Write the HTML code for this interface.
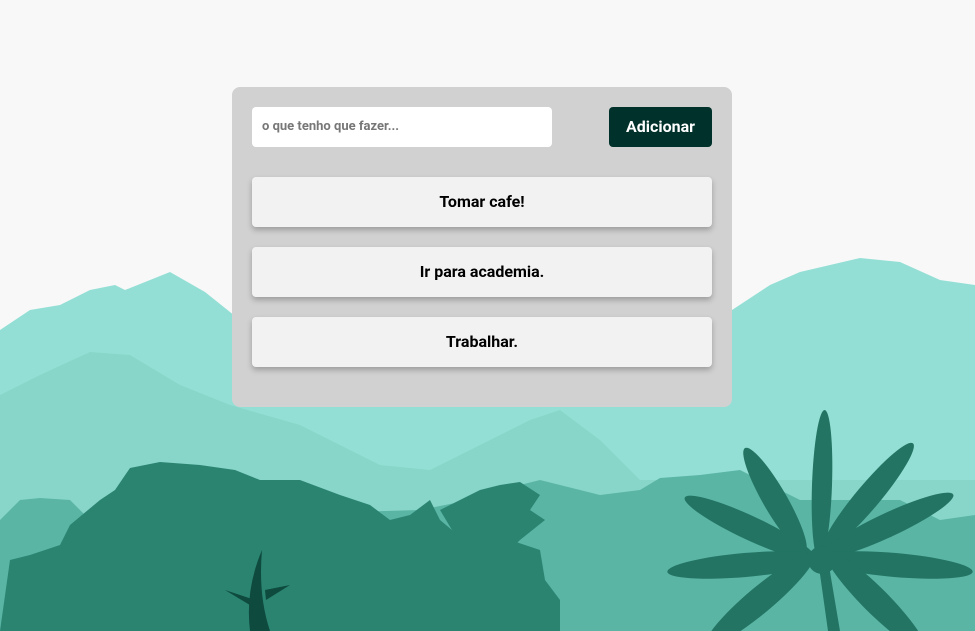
<!DOCTYPE html>
<html><head><meta charset="utf-8"><style>
html,body{margin:0;padding:0;width:975px;height:631px;overflow:hidden;background:#f8f8f8;font-family:"Roboto","Liberation Sans",sans-serif}
svg.bg{position:absolute;left:0;top:0}
.card{position:absolute;left:232px;top:87px;width:500px;height:320px;background:#d1d1d1;border-radius:8px}
.inp{position:absolute;left:20px;top:20px;width:300px;height:40px;background:#fff;border-radius:4px;font-size:13px;font-weight:bold;color:#777;line-height:40px;padding-left:10px;box-sizing:border-box}
.btn{position:absolute;left:377px;top:20px;width:103px;height:40px;background:#00312a;border-radius:4px;color:#fff;font-weight:bold;font-size:16px;line-height:40px;text-align:center}
.item{position:absolute;left:20px;width:460px;height:50px;background:#f2f2f2;border-radius:4px;box-shadow:0 3px 6px rgba(0,0,0,.25);text-align:center;line-height:50px;font-weight:bold;font-size:16px;color:#000}
</style></head><body>
<svg class="bg" width="975" height="631" viewBox="0 0 975 631">
<path d="M0 330 L30 310 L60 305 L90 290 L115 285 L125 290 L170 272 L205 292 L240 320 L480 300 L732 310 L770 285 L800 272 L860 258 L900 262 L940 280 L975 285 L975 631 L0 631Z" fill="#93dfd5"/>
<path d="M0 395 L40 375 L90 352 L130 355 L180 385 L230 405 L300 425 L380 465 L430 470 L470 450 L530 420 L560 410 L600 440 L640 480 L700 480 L975 480 L975 631 L0 631Z" fill="#88d6c9"/>
<path d="M0 520 L20 500 L40 498 L70 500 L90 520 L420 510 L470 500 L500 490 L540 480 L600 495 L640 490 L660 478 L700 475 L740 470 L800 500 L900 500 L940 520 L975 515 L975 631 L0 631Z" fill="#5ab5a5"/>
<path d="M0 631 L10 560 L30 555 L60 545 L70 525 L100 500 L115 490 L130 468 L160 462 L200 465 L235 470 L260 480 L300 480 L340 495 L370 505 L390 520 L410 515 L430 500 L440 520 L470 545 L490 550 L510 540 L540 550 L545 580 L560 600 L560 631Z" fill="#2a8470"/>
<path d="M440 510 L480 490 L500 485 L520 482 L540 495 L530 510 L545 520 L520 540 L500 560 L470 560Z" fill="#2a8470"/>
<g fill="#0e4a3e"><path d="M250 631 Q245 590 262 550 Q258 595 270 631Z"/><path d="M255 600 L225 590 L258 610Z"/><path d="M265 590 L290 585 L266 600Z"/></g>
<g fill="#237462">
<path d="M818 560 L828 560 L840 631 L828 631Z"/>
<ellipse cx="822" cy="485" rx="75" ry="10" transform="rotate(-88 822 485)"/>
<ellipse cx="775" cy="500" rx="60" ry="12" transform="rotate(-120 775 500)"/>
<ellipse cx="750" cy="528" rx="72" ry="12" transform="rotate(-155 750 528)"/>
<ellipse cx="745" cy="565" rx="78" ry="12" transform="rotate(-185 745 565)"/>
<ellipse cx="760" cy="600" rx="70" ry="13" transform="rotate(140 760 600)"/>
<ellipse cx="868" cy="497" rx="70" ry="12" transform="rotate(-50 868 497)"/>
<ellipse cx="888" cy="525" rx="72" ry="12" transform="rotate(-25 888 525)"/>
<ellipse cx="895" cy="565" rx="78" ry="12" transform="rotate(5 895 565)"/>
<ellipse cx="875" cy="600" rx="70" ry="13" transform="rotate(45 875 600)"/>
<circle cx="822" cy="560" r="14"/>
</g>
</svg>
<div class="card">
<div class="inp">o que tenho que fazer...</div>
<div class="btn">Adicionar</div>
<div class="item" style="top:90px">Tomar cafe!</div>
<div class="item" style="top:160px">Ir para academia.</div>
<div class="item" style="top:230px">Trabalhar.</div>
</div>
</body></html>
